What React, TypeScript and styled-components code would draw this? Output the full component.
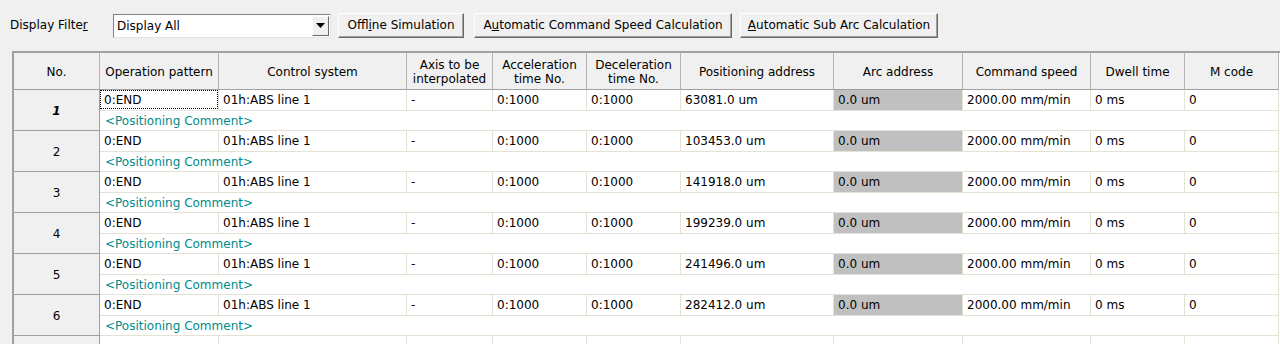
import React from 'react';
import styled, { createGlobalStyle } from 'styled-components';

const GlobalStyle = createGlobalStyle`
	html, body {
		margin: 0;
		padding: 0;
		background: #f0f0f0;
		overflow: hidden;
	}
	body {
		font-family: 'DejaVu Sans', 'Liberation Sans', sans-serif;
		font-size: 12px;
		color: #000;
	}
`;

const columns = [86, 119, 188, 86, 94, 94, 153, 129, 128, 94, 94];

const headers: React.ReactNode[] = [
	'No.',
	'Operation pattern',
	'Control system',
	<>
		Axis to be
		<br />
		interpolated
	</>,
	<>
		Acceleration
		<br />
		time No.
	</>,
	<>
		Deceleration
		<br />
		time No.
	</>,
	'Positioning address',
	'Arc address',
	'Command speed',
	'Dwell time',
	'M code',
];

const addresses = ['63081.0', '103453.0', '141918.0', '199239.0', '241496.0', '282412.0'];

const App = () => {
	return (
		<PageStyle>
			<GlobalStyle />
			<ToolbarStyle>
				<FilterLabel>
					Display Filte<u>r</u>
				</FilterLabel>
				<ComboStyle>
					<span>Display All</span>
					<ComboArrow>
						<svg width="9" height="5" viewBox="0 0 9 5">
							<path d="M0 0 H9 L4.5 5 Z" fill="#000" />
						</svg>
					</ComboArrow>
				</ComboStyle>
				<ToolButton $width={126} $gap={7}>
					Offl<u>i</u>ne Simulation
				</ToolButton>
				<ToolButton $width={258} $gap={10}>
					A<u>u</u>tomatic Command Speed Calculation
				</ToolButton>
				<ToolButton $width={198} $gap={8}>
					<u>A</u>utomatic Sub Arc Calculation
				</ToolButton>
			</ToolbarStyle>

			<GridFrame>
				<GridTable>
					<colgroup>
						{columns.map((w, i) => (
							<col key={i} style={{ width: w }} />
						))}
					</colgroup>
					<thead>
						<tr>
							{headers.map((h, i) => (
								<HeadCell key={i}>{h}</HeadCell>
							))}
						</tr>
					</thead>
					<tbody>
						{addresses.map((addr, i) => (
							<React.Fragment key={i}>
								<tr>
									<NoCell rowSpan={2} $current={i === 0}>
										{i + 1}
									</NoCell>
									<DataCell>{i === 0 ? <FocusBox>0:END</FocusBox> : '0:END'}</DataCell>
									<DataCell>01h:ABS line 1</DataCell>
									<DataCell>-</DataCell>
									<DataCell>0:1000</DataCell>
									<DataCell>0:1000</DataCell>
									<DataCell>{addr} um</DataCell>
									<DataCell $shaded>0.0 um</DataCell>
									<DataCell>2000.00 mm/min</DataCell>
									<DataCell>0 ms</DataCell>
									<DataCell>0</DataCell>
								</tr>
								<tr>
									<CommentCell colSpan={10}>&lt;Positioning Comment&gt;</CommentCell>
								</tr>
							</React.Fragment>
						))}
						<tr>
							<NoCell rowSpan={2}></NoCell>
							{columns.slice(1).map((_, j) => (
								<DataCell key={j}></DataCell>
							))}
						</tr>
					</tbody>
				</GridTable>
			</GridFrame>
		</PageStyle>
	);
};

export default App;

const PageStyle = styled.div`
	width: 1280px;
	height: 344px;
	overflow: hidden;
`;

const ToolbarStyle = styled.div`
	display: flex;
	align-items: center;
	height: 25px;
	padding: 13px 0 0 10px;
`;

const FilterLabel = styled.label`
	width: 103px;
	white-space: nowrap;
	padding-bottom: 1px;
`;

const ComboStyle = styled.div`
	box-sizing: border-box;
	width: 218px;
	height: 24px;
	display: flex;
	align-items: stretch;
	justify-content: space-between;
	background: #fff;
	border-top: 1px solid #828282;
	border-left: 1px solid #828282;
	border-right: 1px solid #e3e3e3;
	border-bottom: 1px solid #e3e3e3;
	padding: 1px;

	span {
		display: flex;
		align-items: center;
		padding-left: 2px;
	}
`;

const ComboArrow = styled.div`
	width: 17px;
	display: flex;
	align-items: center;
	justify-content: center;
	background: #f0f0f0;
	border-top: 1px solid #fff;
	border-left: 1px solid #fff;
	border-right: 1px solid #696969;
	border-bottom: 1px solid #696969;
	box-sizing: border-box;
`;

const ToolButton = styled.button<{ $width: number; $gap: number }>`
	box-sizing: border-box;
	width: ${(p) => p.$width}px;
	height: 25px;
	margin-left: ${(p) => p.$gap}px;
	padding: 0 0 1px;
	font-family: inherit;
	font-size: 12px;
	color: #000;
	background: #f0f0f0;
	border-top: 1px solid #fff;
	border-left: 1px solid #fff;
	border-right: 1px solid #696969;
	border-bottom: 1px solid #696969;
	box-shadow: inset -1px -1px 0 #a0a0a0;
	white-space: nowrap;
`;

const GridFrame = styled.div`
	margin: 13px 0 0 12px;
	width: 1267px;
	border-top: 2px solid #a0a0a0;
	border-left: 2px solid #a0a0a0;
	background: #fff;
`;

const GridTable = styled.table`
	width: 1265px;
	table-layout: fixed;
	border-collapse: separate;
	border-spacing: 0;

	td,
	th {
		box-sizing: border-box;
		white-space: nowrap;
		overflow: hidden;
		font-weight: normal;
	}
`;

const HeadCell = styled.th`
	background: #f0f0f0;
	height: 37px;
	padding: 2px 2px 0;
	line-height: 14px;
	text-align: center;
	vertical-align: middle;
	border-right: 1px solid #b4b4b4;
	border-bottom: 1px solid #a0a0a0;
`;

const NoCell = styled.td<{ $current?: boolean }>`
	background: #f0f0f0;
	text-align: center;
	vertical-align: middle;
	border-right: 1px solid #a0a0a0;
	border-bottom: 1px solid #a0a0a0;
	padding-top: 2px;
	font-weight: ${(p) => (p.$current ? 'bold' : 'normal')} !important;
	font-style: ${(p) => (p.$current ? 'italic' : 'normal')};
`;

const DataCell = styled.td<{ $shaded?: boolean }>`
	height: 21px;
	padding: 1px 4px 0;
	line-height: 19px;
	background: ${(p) => (p.$shaded ? '#c0c0c0' : '#fff')};
	border-right: 1px solid #e4e1d5;
	border-bottom: 1px solid #e4e1d5;
	position: relative;
`;

const FocusBox = styled.span`
	position: absolute;
	inset: 0 0 1px 0;
	padding: 1px 0 0 3px;
	border: 1px dotted #000;
	line-height: 17px;
`;

const CommentCell = styled.td`
	height: 20px;
	padding: 2px 5px 0;
	line-height: 17px;
	color: #008b8b;
	background: #fff;
	border-right: 1px solid #e4e1d5;
	border-bottom: 1px solid #e4e1d5;
`;
